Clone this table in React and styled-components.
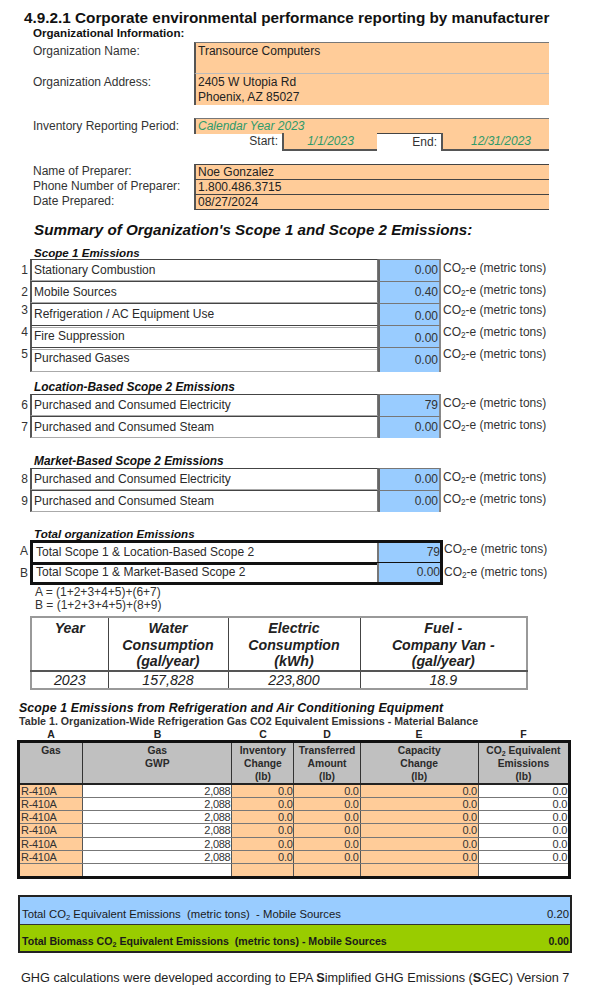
import React from 'react';
import styled, { createGlobalStyle } from 'styled-components';

const ORANGE = '#ffcc99';
const BLUE = '#99ccff';
const GREEN = '#99cc00';
const GRAY = '#c0c0c0';
const TEAL = '#2f9a6a';

const GlobalStyle = createGlobalStyle`
  html, body { margin: 0; padding: 0; background: #fff; }
  body { font-family: "Liberation Sans", Arial, sans-serif; color: #262626; }
  * { box-sizing: border-box; }
`;

const Page = styled.div`
  width: 611px;
  height: 1000px;
  padding-top: 9px;
  overflow: hidden;
`;

const Title = styled.h1`
  margin: 0 0 0 24px;
  font-size: 15.3px;
  line-height: 18px;
  font-weight: bold;
  color: #111;
`;

const SmallHead = styled.div`
  margin: 0 0 0 33px;
  font-size: 11.6px;
  line-height: 12px;
  font-weight: bold;
  color: #111;
`;

/* ---------- organization info ---------- */

const FieldRow = styled.div`
  display: grid;
  grid-template-columns: 161px 355px;
  margin-left: 33px;
  margin-top: ${p => p.$gap || 0}px;
  height: ${p => p.$h}px;
  font-size: 12px;
`;

const FieldLabel = styled.div`
  color: #333;
  line-height: ${p => p.$lh || 15}px;
  padding-top: ${p => p.$pt || 0}px;
`;

const FieldBox = styled.div`
  background: ${ORANGE};
  border-left: 2px solid #555;
  border-top: 1px solid ${p => p.$topColor || '#777'};
  border-bottom: ${p => p.$last ? '1px solid #444' : 'none'};
  padding: ${p => p.$pt || 0}px 0 0 2px;
  line-height: ${p => p.$lh || 14}px;
  color: ${p => p.$italic ? TEAL : '#222'};
  font-style: ${p => p.$italic ? 'italic' : 'normal'};
`;

const PeriodRow = styled.div`
  display: grid;
  grid-template-columns: 88px 95px 64px 108px;
  margin-left: 194px;
  height: 17px;
  font-size: 12px;
  line-height: 16px;
`;

const PeriodLabel = styled.div`
  text-align: right;
  padding-right: 4px;
  color: #333;
  border-top: ${p => p.$topLine ? '1px solid #444' : 'none'};
`;

const PeriodValue = styled.div`
  background: ${ORANGE};
  border-left: 2px solid #555;
  border-bottom: 2px solid #555;
  text-align: center;
  font-style: italic;
  color: ${TEAL};
  padding-left: ${p => p.$shift || 0}px;
`;

/* ---------- summary tables ---------- */

const SectionTitle = styled.h2`
  margin: 11px 0 0 34px;
  font-size: 15.2px;
  line-height: 18px;
  font-weight: bold;
  font-style: italic;
  color: #111;
`;

const SubHead = styled.div`
  margin: ${p => p.$gap || 0}px 0 0 34px;
  font-size: ${p => p.$size || 11.6}px;
  line-height: 12px;
  font-weight: bold;
  font-style: italic;
  color: #111;
`;

const EmTable = styled.div`
  margin-top: ${p => p.$gap || 0}px;
  display: flex;
  flex-direction: column;
`;

const EmRow = styled.div`
  display: grid;
  grid-template-columns: 30px 348px 63px 1fr;
  height: 22px;
  font-size: 12px;
`;

const TotalRow = styled.div`
  display: grid;
  grid-template-columns: 30px 413px 1fr;
  height: ${p => p.$h}px;
  font-size: 12px;
`;

const RowNum = styled.div`
  text-align: right;
  padding-right: 2px;
  color: #333;
  line-height: ${p => p.$raised ? '15px' : `${p.$h || 22}px`};
`;

const LabelCell = styled.div`
  border-left: 2px solid #555;
  border-top: 1px solid #444;
  border-bottom: 1px solid #aaa;
  border-right: 1px solid #777;
  padding-left: 2px;
  line-height: 20px;
  color: #2a2a2a;
`;

const ValueCell = styled.div`
  background: ${BLUE};
  border-left: 2px solid #666;
  border-right: 2px solid #888;
  border-top: 1px solid #777;
  text-align: right;
  padding-right: 1px;
  line-height: ${p => p.$raised ? '24px' : '21px'};
  color: #333;
`;

const UnitCell = styled.div`
  padding-left: ${p => p.$pl || 2}px;
  line-height: ${p => p.$raised ? '15px' : '19px'};
  color: #333;
  white-space: nowrap;
`;

const Sub = styled.sub`
  font-size: 0.68em;
  vertical-align: -0.3em;
  line-height: 0;
`;

const TotalBox = styled.div`
  border: 3px solid #111;
  border-top-width: ${p => p.$first ? 3 : 0}px;
  display: grid;
  grid-template-columns: 344px 1fr;
`;

const TotalLabel = styled.div`
  padding-left: 3px;
  line-height: 18px;
  color: #2a2a2a;
`;

const TotalValue = styled.div`
  background: ${BLUE};
  border-left: 2px solid #777;
  text-align: right;
  line-height: 19px;
  color: #333;
  white-space: nowrap;
`;

const Formula = styled.div`
  margin: ${p => p.$gap || 0}px 0 0 35px;
  font-size: 12px;
  line-height: 13px;
  color: #333;
`;

/* ---------- consumption table ---------- */

const UseTable = styled.table`
  margin: 4px 0 0 30px;
  width: 496px;
  border-collapse: collapse;
  border: 2px solid #999;
  font-size: 14.2px;
  font-style: italic;
  color: #222;
  table-layout: fixed;
`;

const UseHead = styled.th`
  height: 47px;
  vertical-align: top;
  border: 1px solid #444;
  border-bottom: 2px solid #555;
  font-weight: bold;
  line-height: 16.5px;
  padding: 2px 0 0;
  text-align: center;
`;

const UseCell = styled.td`
  height: 16px;
  border: 1px solid #444;
  text-align: center;
  line-height: 16px;
  padding: 0;
`;

/* ---------- refrigeration table ---------- */

const RefTitle = styled.div`
  margin: 12px 0 0 19px;
  font-size: 12.3px;
  line-height: 13px;
  font-weight: bold;
  font-style: italic;
  letter-spacing: 0.15px;
  color: #111;
`;

const RefCaption = styled.div`
  margin: 1px 0 0 19px;
  font-size: 10.65px;
  line-height: 11px;
  font-weight: bold;
  color: #333;
`;

const COLS = [64, 149, 62, 66, 118, 91];

const LetterRow = styled.div`
  display: grid;
  grid-template-columns: ${COLS.map(c => c + 'px').join(' ')};
  margin: 1px 0 0 19px;
  font-size: 10.5px;
  line-height: 12px;
  font-weight: bold;
  text-align: center;
  color: #222;
`;

const RefTable = styled.table`
  margin: 0 0 0 17px;
  width: 554px;
  border-collapse: collapse;
  border: 3px solid #111;
  table-layout: fixed;
  font-size: 11px;
  color: #333;
`;

const RefHead = styled.th`
  background: ${GRAY};
  height: 40px;
  border: 1px solid #333;
  border-bottom: 2px solid #222;
  vertical-align: top;
  font-size: 10.3px;
  font-weight: bold;
  line-height: 13px;
  padding: 1px 0 0;
  color: #2a2a2a;
`;

const RefCell = styled.td`
  height: 13.4px;
  padding: 0 1px;
  line-height: 12px;
  background: ${p => p.$tone === 'o' ? ORANGE : '#fff'};
  text-align: ${p => p.$left ? 'left' : 'right'};
  border-right: 1px solid #555;
  border-bottom: 1px solid #777;
  letter-spacing: -0.3px;
  white-space: nowrap;
  overflow: hidden;
`;

/* ---------- totals bars ---------- */

const Bars = styled.div`
  margin: 16px 0 0 18px;
  width: 554px;
  border: 2px solid #222;
`;

const Bar = styled.div`
  display: flex;
  justify-content: space-between;
  align-items: flex-end;
  height: ${p => p.$h}px;
  background: ${p => p.$bg};
  border-top: ${p => p.$line ? '1px solid #333' : 'none'};
  padding: 0 1px 4px 2px;
  font-size: ${p => p.$size}px;
  line-height: 12px;
  font-weight: ${p => p.$bold ? 'bold' : 'normal'};
  color: #1a1a1a;
`;

const Footer = styled.p`
  margin: 18px 0 0 21px;
  font-size: 12.7px;
  line-height: 14px;
  color: #1e1e1e;
  white-space: nowrap;

  b { font-weight: bold; }
`;

const scope1 = [
  ['1', 'Stationary Combustion', '0.00', false],
  ['2', 'Mobile Sources', '0.40', false],
  ['3', 'Refrigeration / AC Equipment Use', '0.00', true],
  ['4', 'Fire Suppression', '0.00', true],
  ['5', 'Purchased Gases', '0.00', true],
];

const locationRows = [
  ['6', 'Purchased and Consumed Electricity', '79'],
  ['7', 'Purchased and Consumed Steam', '0.00'],
];

const marketRows = [
  ['8', 'Purchased and Consumed Electricity', '0.00'],
  ['9', 'Purchased and Consumed Steam', '0.00'],
];

const Unit = () => <>CO<Sub>2</Sub>-e (metric tons)</>;

const EmissionRows = ({ rows }) => rows.map(([n, label, value, raised]) => (
  <EmRow key={n}>
    <RowNum $raised={raised}>{n}</RowNum>
    <LabelCell>{label}</LabelCell>
    <ValueCell $raised={raised}>{value}</ValueCell>
    <UnitCell $raised={raised}><Unit /></UnitCell>
  </EmRow>
));

const gasRows = Array.from({ length: 6 }, () => ['R-410A', '2,088', '0.0', '0.0', '0.0', '0.0']);

export default function App() {
  return (
    <Page>
      <GlobalStyle />
      <Title>4.9.2.1 Corporate environmental performance reporting by manufacturer</Title>
      <SmallHead>Organizational Information:</SmallHead>

      <FieldRow $gap={3} $h={31}>
        <FieldLabel $pt={2}>Organization Name:</FieldLabel>
        <FieldBox $pt={1}>Transource Computers</FieldBox>
      </FieldRow>
      <FieldRow $h={30}>
        <FieldLabel $pt={2}>Organization Address:</FieldLabel>
        <FieldBox $pt={1} $lh={15} $topColor="#bbb">2405 W Utopia Rd<br />Phoenix, AZ 85027</FieldBox>
      </FieldRow>

      <FieldRow $gap={15} $h={15}>
        <FieldLabel $pt={1}>Inventory Reporting Period:</FieldLabel>
        <FieldBox $italic>Calendar Year 2023</FieldBox>
      </FieldRow>
      <PeriodRow>
        <PeriodLabel>Start:</PeriodLabel>
        <PeriodValue>1/1/2023</PeriodValue>
        <PeriodLabel $topLine>End:</PeriodLabel>
        <PeriodValue $shift={10}>12/31/2023</PeriodValue>
      </PeriodRow>

      <FieldRow $gap={14} $h={15}>
        <FieldLabel>Name of Preparer:</FieldLabel>
        <FieldBox $topColor="#444">Noe Gonzalez</FieldBox>
      </FieldRow>
      <FieldRow $h={15}>
        <FieldLabel>Phone Number of Preparer:</FieldLabel>
        <FieldBox $topColor="#444">1.800.486.3715</FieldBox>
      </FieldRow>
      <FieldRow $h={16}>
        <FieldLabel>Date Prepared:</FieldLabel>
        <FieldBox $topColor="#444" $last>08/27/2024</FieldBox>
      </FieldRow>

      <SectionTitle>Summary of Organization's Scope 1 and Scope 2 Emissions:</SectionTitle>

      <SubHead $gap={8}>Scope 1 Emissions</SubHead>
      <EmTable>
        <EmissionRows rows={scope1} />
      </EmTable>

      <SubHead $gap={12} $size={11.9}>Location-Based Scope 2 Emissions</SubHead>
      <EmTable $gap={1}>
        <EmissionRows rows={locationRows} />
      </EmTable>

      <SubHead $gap={17} $size={11.9}>Market-Based Scope 2 Emissions</SubHead>
      <EmTable $gap={1}>
        <EmissionRows rows={marketRows} />
      </EmTable>

      <SubHead $gap={16}>Total organization Emissions</SubHead>
      <EmTable>
        <TotalRow $h={23}>
          <RowNum $h={23}>A</RowNum>
          <TotalBox $first>
            <TotalLabel>Total Scope 1 &amp; Location-Based Scope 2</TotalLabel>
            <TotalValue>79</TotalValue>
          </TotalBox>
          <UnitCell $pl={1}><Unit /></UnitCell>
        </TotalRow>
        <TotalRow $h={21}>
          <RowNum $h={21}>B</RowNum>
          <TotalBox>
            <TotalLabel>Total Scope 1 &amp; Market-Based Scope 2</TotalLabel>
            <TotalValue>0.00</TotalValue>
          </TotalBox>
          <UnitCell $pl={1}><Unit /></UnitCell>
        </TotalRow>
      </EmTable>
      <Formula $gap={2}>A = (1+2+3+4+5)+(6+7)</Formula>
      <Formula>B = (1+2+3+4+5)+(8+9)</Formula>

      <UseTable>
        <colgroup>
          <col style={{ width: 77 }} />
          <col style={{ width: 120 }} />
          <col style={{ width: 132 }} />
          <col style={{ width: 167 }} />
        </colgroup>
        <thead>
          <tr>
            <UseHead>Year</UseHead>
            <UseHead>Water<br />Consumption<br />(gal/year)</UseHead>
            <UseHead>Electric<br />Consumption<br />(kWh)</UseHead>
            <UseHead>Fuel -<br />Company Van -<br />(gal/year)</UseHead>
          </tr>
        </thead>
        <tbody>
          <tr>
            <UseCell>2023</UseCell>
            <UseCell>157,828</UseCell>
            <UseCell>223,800</UseCell>
            <UseCell>18.9</UseCell>
          </tr>
        </tbody>
      </UseTable>

      <RefTitle>Scope 1 Emissions from Refrigeration and Air Conditioning Equipment</RefTitle>
      <RefCaption>Table 1. Organization-Wide Refrigeration Gas CO2 Equivalent Emissions - Material Balance</RefCaption>
      <LetterRow>
        {['A', 'B', 'C', 'D', 'E', 'F'].map(l => <span key={l}>{l}</span>)}
      </LetterRow>
      <RefTable>
        <colgroup>
          {COLS.map((w, i) => <col key={i} style={{ width: w }} />)}
        </colgroup>
        <thead>
          <tr>
            <RefHead>Gas</RefHead>
            <RefHead>Gas<br />GWP</RefHead>
            <RefHead>Inventory<br />Change<br />(lb)</RefHead>
            <RefHead>Transferred<br />Amount<br />(lb)</RefHead>
            <RefHead>Capacity<br />Change<br />(lb)</RefHead>
            <RefHead>CO<Sub>2</Sub> Equivalent<br />Emissions<br />(lb)</RefHead>
          </tr>
        </thead>
        <tbody>
          {gasRows.map((r, i) => (
            <tr key={i}>
              <RefCell $tone="o" $left>{r[0]}</RefCell>
              <RefCell>{r[1]}</RefCell>
              <RefCell $tone="o">{r[2]}</RefCell>
              <RefCell $tone="o">{r[3]}</RefCell>
              <RefCell $tone="o">{r[4]}</RefCell>
              <RefCell>{r[5]}</RefCell>
            </tr>
          ))}
          <tr>
            <RefCell $tone="o" />
            <RefCell />
            <RefCell $tone="o" />
            <RefCell $tone="o" />
            <RefCell $tone="o" />
            <RefCell />
          </tr>
        </tbody>
      </RefTable>

      <Bars>
        <Bar $bg={BLUE} $h={27} $size={11.3}>
          <span>Total CO<Sub>2</Sub> Equivalent Emissions&nbsp; (metric tons)&nbsp; - Mobile Sources</span>
          <span>0.20</span>
        </Bar>
        <Bar $bg={GREEN} $h={27} $size={10.6} $line $bold>
          <span>Total Biomass CO<Sub>2</Sub> Equivalent Emissions&nbsp; (metric tons) - Mobile Sources</span>
          <span>0.00</span>
        </Bar>
      </Bars>

      <Footer>
        GHG calculations were developed according to EPA <b>S</b>implified GHG Emissions (<b>S</b>GEC) Version 7
      </Footer>
    </Page>
  );
}
